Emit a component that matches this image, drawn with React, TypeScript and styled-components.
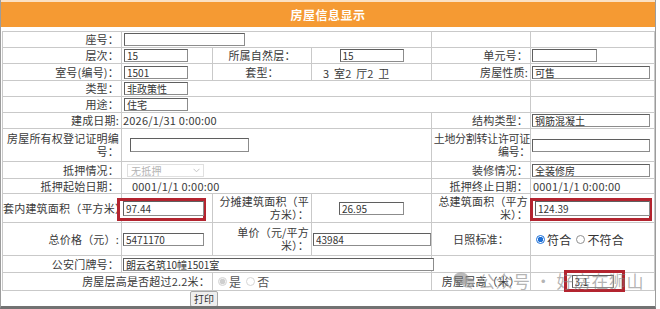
import React from 'react';
import styled, { createGlobalStyle } from 'styled-components';

const GlobalStyle = createGlobalStyle`
	html, body {
		margin: 0;
		padding: 0;
		background: #fff;
	}
	body {
		font-family: 'Noto Sans CJK SC', 'Noto Sans', sans-serif;
	}
`;

const Frame = styled.div`
	position: relative;
	width: 654px;
	height: 306px;
	border-left: 1px solid #9c9c9c;
	border-right: 1px solid #9c9c9c;
	border-bottom: 3px solid #727272;
	background: #fff;
	overflow: hidden;
`;

const Header = styled.div`
	height: 25px;
	border-top: 2px solid #fbe1c4;
	margin-bottom: 4px;
	background: #f59a33;
	display: flex;
	align-items: center;
	justify-content: center;
	color: #fff;
	font-size: 12px;
	font-weight: bold;
	letter-spacing: 0.5px;
`;

const Sheet = styled.table`
	border-collapse: collapse;
	table-layout: fixed;
	width: 653px;
	margin-left: 1px;
	font-size: 11px;
	color: #3a3a3a;
`;

const Row = styled.tr<{ $h: number }>`
	height: ${p => p.$h}px;
`;

const Cell = styled.td<{
	$align?: 'left' | 'right' | 'center';
	$nowrap?: boolean;
	$pad?: number;
	$tight?: boolean;
}>`
	box-sizing: border-box;
	border: 1px solid #c9c9c9;
	padding: 0 ${p => (p.$tight ? 0 : 2)}px 0 ${p => p.$pad ?? 2}px;
	text-align: ${p => p.$align ?? 'left'};
	vertical-align: middle;
	line-height: 13px;
	letter-spacing: ${p => (p.$tight ? -0.3 : 0.2)}px;
	white-space: ${p => (p.$nowrap ? 'nowrap' : 'normal')};
	word-break: break-all;
`;

const Field = styled.input<{ $w: number; $h?: number }>`
	box-sizing: border-box;
	width: ${p => p.$w}px;
	height: ${p => p.$h ?? 13}px;
	margin: 0;
	padding: 0 2px;
	border: 1px solid #5f5f5f;
	border-right-color: #8c8c8c;
	border-bottom-color: #8c8c8c;
	background: #fff;
	font-family: 'Noto Sans CJK SC', sans-serif;
	font-size: 10px;
	letter-spacing: 0;
	color: #333;
	vertical-align: top;
	outline: none;
`;

const Marked = styled.span<{ $ring: string }>`
	position: relative;
	display: inline-block;
	vertical-align: top;
	line-height: 0;

	&::before {
		content: '';
		position: absolute;
		inset: ${p => p.$ring};
		border: 3px solid #b3242f;
		background: #fff;
	}

	& > input {
		position: relative;
	}
`;

const FakeSelect = styled.span`
	box-sizing: border-box;
	display: inline-flex;
	align-items: center;
	justify-content: space-between;
	width: 77px;
	height: 13px;
	margin-left: 3px;
	padding: 0 3px;
	border: 1px solid #e0e0e0;
	color: #b4b4b4;
	font-size: 10px;
	vertical-align: top;
`;

const Choice = styled.label<{ $muted?: boolean }>`
	display: inline-flex;
	align-items: center;
	gap: 2px;
	margin-right: 5px;
	font-size: 12px;
	color: ${p => (p.$muted ? '#555' : '#333')};
	vertical-align: top;
`;

const Dot = styled.span<{ $on?: boolean; $muted?: boolean }>`
	box-sizing: border-box;
	width: 9px;
	height: 9px;
	border-radius: 50%;
	border: 1px solid ${p => (p.$muted ? '#d6d6d6' : p.$on ? '#1d6fd6' : '#8f8f8f')};
	background: ${p =>
		p.$on
			? p.$muted
				? 'radial-gradient(circle, #cfcfcf 0 2.5px, #f2f2f2 3px)'
				: 'radial-gradient(circle, #1d6fd6 0 2.5px, #fff 3px)'
			: '#fff'};
`;

const Rooms = styled.span`
	display: inline-block;
	padding: 3px 0 0 9px;
	font-size: 11px;
	word-spacing: 2px;
`;

const ButtonBar = styled.div`
	display: flex;
	padding: 0 0 0 189px;
`;

const PrintButton = styled.button`
	height: 16px;
	padding: 0 3px;
	border: 1px solid #a8a8a8;
	border-radius: 2px;
	background: #efefef;
	font-family: 'Noto Sans CJK SC', sans-serif;
	font-size: 10px;
	line-height: 12px;
	color: #333;
`;

const Watermark = styled.div`
	position: absolute;
	left: 452px;
	top: 268px;
	display: flex;
	align-items: center;
	gap: 3px;
	color: rgba(130, 130, 130, 0.6);
	font-size: 17px;
	letter-spacing: 0.5px;
	pointer-events: none;
	z-index: 5;
`;

const Chevron = () => (
	<svg width="7" height="5" viewBox="0 0 7 5">
		<path d="M0.5 0.8 L3.5 3.8 L6.5 0.8" fill="none" stroke="#c4c4c4" strokeWidth="1" />
	</svg>
);

const ChatMark = () => (
	<svg width="22" height="19" viewBox="0 0 22 19">
		<ellipse cx="8" cy="7.5" rx="7.5" ry="6.3" fill="rgba(130,130,130,0.55)" />
		<path d="M4 12 L3 16 L7.5 13.2 Z" fill="rgba(130,130,130,0.55)" />
		<ellipse cx="15" cy="11.5" rx="6.3" ry="5.2" fill="rgba(170,170,170,0.6)" />
		<path d="M18 15.5 L19.5 18.5 L15.5 16.4 Z" fill="rgba(170,170,170,0.6)" />
	</svg>
);

const App = () => {
	return (
		<>
			<GlobalStyle />
			<Frame>
				<Header>房屋信息显示</Header>
				<Sheet>
					<colgroup>
						<col style={{ width: 119 }} />
						<col style={{ width: 91 }} />
						<col style={{ width: 99 }} />
						<col style={{ width: 120 }} />
						<col style={{ width: 99 }} />
						<col style={{ width: 124 }} />
					</colgroup>
					<tbody>
						<Row $h={16}>
							<Cell $align="right">座号：</Cell>
							<Cell colSpan={3}>
								<Field $w={121} defaultValue="" />
							</Cell>
							<Cell />
							<Cell />
						</Row>
						<Row $h={16}>
							<Cell $align="right">层次：</Cell>
							<Cell>
								<Field $w={64} defaultValue="15" />
							</Cell>
							<Cell $align="center">所属自然层：</Cell>
							<Cell $align="center">
								<Field $w={64} defaultValue="15" />
							</Cell>
							<Cell $align="right" $nowrap>单元号：</Cell>
							<Cell $pad={1}>
								<Field $w={65} defaultValue="" />
							</Cell>
						</Row>
						<Row $h={16}>
							<Cell $align="right">室号(编号)：</Cell>
							<Cell>
								<Field $w={64} defaultValue="1501" />
							</Cell>
							<Cell $align="center">套型：</Cell>
							<Cell>
								<Rooms>3 室2 厅2 卫</Rooms>
							</Cell>
							<Cell $align="right" $nowrap>房屋性质:</Cell>
							<Cell $pad={1}>
								<Field $w={118} defaultValue="可售" />
							</Cell>
						</Row>
						<Row $h={16}>
							<Cell $align="right">类型：</Cell>
							<Cell colSpan={4}>
								<Field $w={64} defaultValue="非政策性" />
							</Cell>
							<Cell />
						</Row>
						<Row $h={16}>
							<Cell $align="right">用途：</Cell>
							<Cell colSpan={4}>
								<Field $w={64} defaultValue="住宅" />
							</Cell>
							<Cell />
						</Row>
						<Row $h={16}>
							<Cell $align="right">建成日期:</Cell>
							<Cell colSpan={3} $pad={1}>2026/1/31 0:00:00</Cell>
							<Cell $align="right">结构类型：</Cell>
							<Cell $pad={1}>
								<Field $w={118} defaultValue="钢筋混凝土" />
							</Cell>
						</Row>
						<Row $h={33}>
							<Cell $align="right">房屋所有权登记证明编号：</Cell>
							<Cell colSpan={3} $pad={8}>
								<Field $w={119} $h={14} defaultValue="" />
							</Cell>
							<Cell $align="right" $tight $pad={0}>土地分割转让许可证编号：</Cell>
							<Cell $pad={1}>
								<Field $w={118} defaultValue="" />
							</Cell>
						</Row>
						<Row $h={17}>
							<Cell $align="right">抵押情况：</Cell>
							<Cell colSpan={3}>
								<FakeSelect>
									无抵押
									<Chevron />
								</FakeSelect>
							</Cell>
							<Cell $align="right">装修情况：</Cell>
							<Cell $pad={1}>
								<Field $w={118} defaultValue="全装修房" />
							</Cell>
						</Row>
						<Row $h={15}>
							<Cell $align="right">抵押起始日期：</Cell>
							<Cell colSpan={3} $pad={10}>0001/1/1 0:00:00</Cell>
							<Cell $align="right">抵押终止日期：</Cell>
							<Cell $pad={2}>0001/1/1 0:00:00</Cell>
						</Row>
						<Row $h={29}>
							<Cell $nowrap $pad={0}>套内建筑面积（平方米）：</Cell>
							<Cell $pad={1}>
								<Marked $ring="-3px -2px -5px -6px">
									<Field $w={81} $h={15} defaultValue="97.44" />
								</Marked>
							</Cell>
							<Cell $align="right">分摊建筑面积（平方米）：</Cell>
							<Cell $align="center">
								<Field $w={65} defaultValue="26.95" />
							</Cell>
							<Cell $align="right">总建筑面积（平方米）：</Cell>
							<Cell $pad={4}>
								<Marked $ring="-3px -2px -5px -5px">
									<Field $w={115} $h={15} defaultValue="124.39" />
								</Marked>
							</Cell>
						</Row>
						<Row $h={33}>
							<Cell $align="right" $nowrap>总价格（元）:</Cell>
							<Cell $pad={1}>
								<Field $w={81} defaultValue="5471170" />
							</Cell>
							<Cell $align="right">单价（元/平方米）：</Cell>
							<Cell $pad={1}>
								<Field $w={118} defaultValue="43984" />
							</Cell>
							<Cell $align="center">日照标准：</Cell>
							<Cell $pad={5}>
								<Choice>
									<Dot $on />
									符合
								</Choice>
								<Choice>
									<Dot />
									不符合
								</Choice>
							</Cell>
						</Row>
						<Row $h={17}>
							<Cell $align="right">公安门牌号：</Cell>
							<Cell colSpan={3} $pad={1}>
								<Field $w={311} defaultValue="朗云名筑10幢1501室" />
							</Cell>
							<Cell />
							<Cell />
						</Row>
						<Row $h={18}>
							<Cell colSpan={2} $align="right">房屋层高是否超过2.2米：</Cell>
							<Cell colSpan={2} $pad={5}>
								<Choice $muted>
									<Dot $on $muted />
									是
								</Choice>
								<Choice $muted>
									<Dot $muted />
									否
								</Choice>
							</Cell>
							<Cell $align="center" $nowrap>房屋层高（米）</Cell>
							<Cell $align="center">
								<Marked $ring="-5px -11px -4px -8px">
									<Field $w={42} defaultValue="3.1" />
								</Marked>
							</Cell>
						</Row>
					</tbody>
				</Sheet>
				<ButtonBar>
					<PrintButton type="button">打印</PrintButton>
				</ButtonBar>
				<Watermark>
					<ChatMark />
					<span>公众号 · 好房在狮山</span>
				</Watermark>
			</Frame>
		</>
	);
};

export default App;
